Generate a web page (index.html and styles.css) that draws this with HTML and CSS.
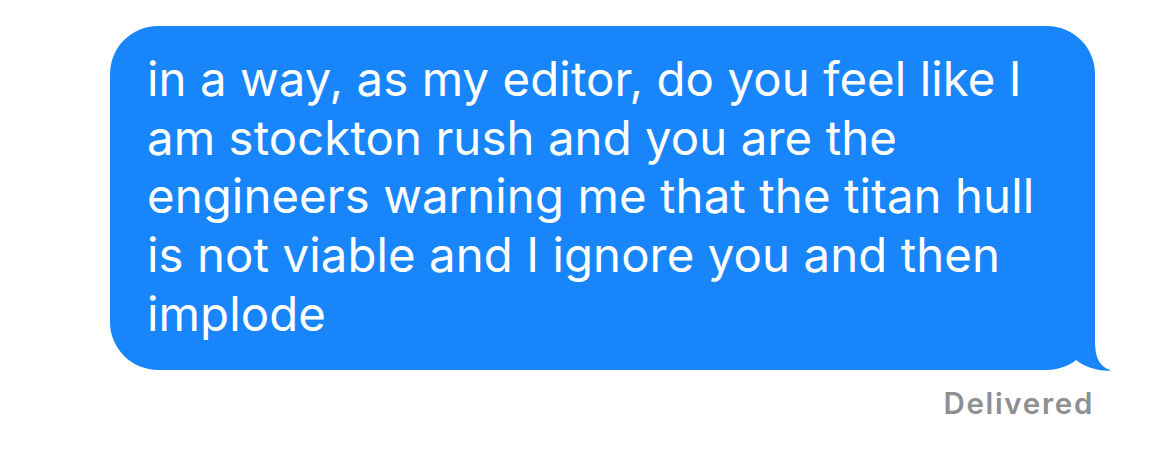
FILE: index.html
```html
<!DOCTYPE HTML>
<html>
<head>
    <title>Message</title>
    <meta charset="utf-8">
    <link rel="stylesheet" href="styles.css">
</head>
<body>
    <div class="thread">
        <div class="bubble">
            in a way, as my editor, do you feel like I<br>
            am stockton rush and you are the<br>
            engineers warning me that the titan hull<br>
            is not viable and I ignore you and then<br>
            implode
            <svg class="tail" width="78" height="52" viewBox="0 0 78 52">
                <path d="M60 0 V20 C60 38 64 46 76 50.5 C68 51.5 52 49 41 40 L40 0 Z" fill="#1886fa"/>
            </svg>
        </div>
        <div class="status">Delivered</div>
    </div>
</body>
</html>
```

FILE: styles.css
```css
* {
    box-sizing: border-box;
}

body {
    margin: 0;
    padding: 0;
    background: #ffffff;
    font-family: "Inter", "Roboto", sans-serif;
}

.thread {
    display: flex;
    flex-direction: column;
    width: 985px;
    margin: 26px 0 0 110px;
}

.bubble {
    position: relative;
    background: #1886fa;
    color: #ffffff;
    border-radius: 48px;
    padding: 24px 20px 0 37px;
    font-size: 47.3px;
    letter-spacing: 0.1px;
    line-height: 58.7px;
    height: 344px;
}

.tail {
    position: absolute;
    right: -18px;
    bottom: -2px;
}

.status {
    align-self: flex-end;
    margin-top: 15px;
    margin-right: 1px;
    color: #8e8e93;
    font-size: 29.5px;
    letter-spacing: 1.7px;
    font-weight: 600;
}
```
